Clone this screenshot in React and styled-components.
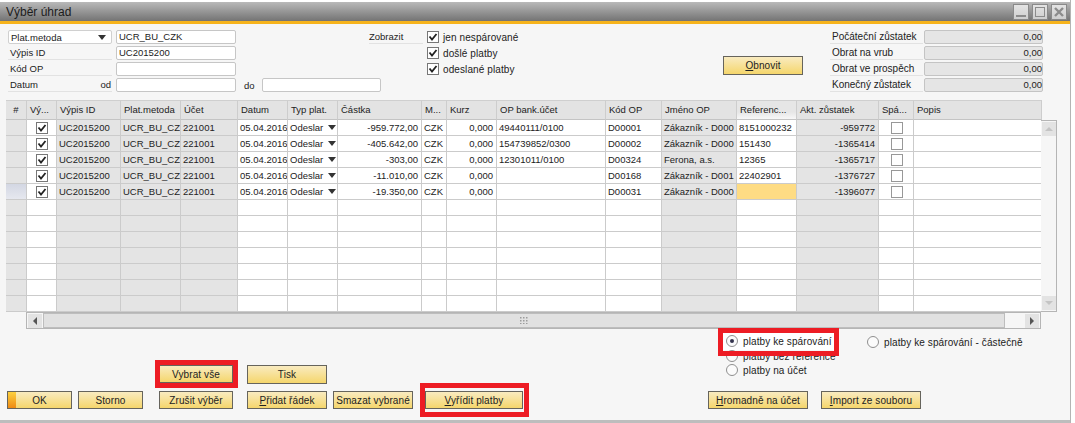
import React from 'react';
import styled, { createGlobalStyle } from 'styled-components';

const GlobalStyle = createGlobalStyle`
  html, body {
    margin: 0;
    padding: 0;
    background: #fff;
    font-family: "Liberation Sans", Arial, sans-serif;
    font-size: 9.5px;
    color: #222;
  }
`;

const Window = styled.div`
  width: 1071px;
  height: 423px;
  box-sizing: border-box;
  padding-top: 2px;
  background: #fff;
  border-right: 1px solid #b4b4b4;
  display: flex;
  flex-direction: column;
`;

const TitleBar = styled.div`
  height: 19px;
  flex: none;
  display: flex;
  align-items: center;
  justify-content: space-between;
  padding: 0 3px 0 6px;
  background: linear-gradient(#b9b9b9, #8f8f8f 60%, #747474);
  border-bottom: 3px solid #f6b31b;
  color: #1c1c1c;
  font-size: 12px;
`;

const TitleButtons = styled.div`
  display: flex;
  gap: 3px;
`;

const TitleButton = styled.div`
  width: 16px;
  height: 16px;
  box-sizing: border-box;
  border: 1px solid #8a8a8a;
  background: linear-gradient(#e4e4e4, #cfcfcf);
  display: flex;
  align-items: center;
  justify-content: center;
`;

const Body = styled.div`
  flex: 1;
  background: #f6f6f6;
  padding: 6px 0 0 6px;
  border-bottom: 3px solid #bdbdbd;
  min-height: 0;
`;

const TopForm = styled.div`
  height: 64px;
  padding-left: 2px;
  margin-bottom: 6px;
  display: flex;
  align-items: flex-start;
`;

const FilterGrid = styled.div`
  width: 373px;
  flex: none;
  display: grid;
  grid-template-columns: 104px 120px 18px 119px;
  column-gap: 4px;
  grid-auto-rows: 14px;
  row-gap: 2px;
`;

const FieldLabel = styled.div`
  display: flex;
  justify-content: space-between;
  align-items: center;
  padding: 0 1px 0 2px;
  border-bottom: 1px solid #e2e2e2;
  white-space: nowrap;
  font-size: ${(p) => (p.$large ? '10px' : '9.5px')};
`;

const ComboBox = styled(FieldLabel)`
  background: #fff;
  border: 1px solid #d0d0d0;
  border-radius: 2px;
  padding: 0 5px 0 2px;
`;

const ToLabel = styled.div`
  display: flex;
  align-items: center;
  padding-left: 4px;
`;

const TextInput = styled.div`
  box-sizing: border-box;
  height: 14px;
  line-height: 12px;
  padding: 0 2px;
  background: #fff;
  border: 1px solid #c6c6c6;
  border-radius: 2px;
`;

const ShowBlock = styled.div`
  margin-left: -12px;
  width: 354px;
  flex: none;
  display: grid;
  grid-template-columns: 54px 1fr;
  column-gap: 4px;
  grid-auto-rows: 14px;
  row-gap: 2px;
`;

const ShowLabel = styled(FieldLabel)`
  grid-row: 1;
  padding-left: 0;
`;

const ShowOption = styled.div`
  grid-column: 2;
  display: flex;
  align-items: center;
  gap: 4px;
  font-size: 10px;
  letter-spacing: 0.1px;
`;

const Box = styled.div`
  width: 12px;
  height: 12px;
  box-sizing: border-box;
  background: #fff;
  border: 1px solid ${(p) => (p.$checked ? '#777' : '#989898')};
  display: flex;
  align-items: center;
  justify-content: center;
  flex: none;
`;

const RefreshColumn = styled.div`
  width: 107px;
  flex: none;
  padding-top: 26px;
  box-sizing: border-box;
  height: 64px;
`;

const BalanceGrid = styled.div`
  display: grid;
  grid-template-columns: 93px 119px;
  column-gap: 1px;
  grid-auto-rows: 14px;
  row-gap: 2px;
  font-size: 10px;
`;

const BalanceField = styled.div`
  box-sizing: border-box;
  background: #e5e5e5;
  border: 1px solid #c4c4c4;
  border-radius: 2px;
  text-align: right;
  line-height: 12px;
  font-size: 9.5px;
`;

const Button = styled.button`
  position: relative;
  display: block;
  width: ${(p) => p.$width}px;
  height: ${(p) => p.$height || 18}px;
  padding: 0;
  box-sizing: border-box;
  border: 1px solid #66645c;
  border-width: 1px 1px 1.5px 1px;
  background: linear-gradient(#f9ebc0, #f5d66c);
  color: #222;
  font: 10px "Liberation Sans", Arial, sans-serif;
  letter-spacing: 0.1px;
  overflow: hidden;
  text-align: center;
  flex: none;
`;

const DefaultStripe = styled.span`
  position: absolute;
  left: 0;
  top: 0;
  bottom: 0;
  width: 8px;
  background: linear-gradient(#fdd13f, #ee8a12);
`;

const Mnemonic = styled.span`
  text-decoration: underline;
`;

const GridFrame = styled.div`
  width: 1052px;
`;

const columns = [21, 30, 64, 60, 57, 50, 50, 84, 25, 50, 109, 56, 75, 60, 82, 35, 128];

const GridRow = styled.div`
  width: 1036px;
  display: grid;
  grid-template-columns: ${columns.map((c) => `${c}px`).join(' ')};
  height: ${(p) => (p.$header ? 20 : 16)}px;
`;

const HeaderCell = styled.div`
  box-sizing: border-box;
  padding: 3px 0 0 3px;
  background: ${(p) => (p.$active ? 'linear-gradient(#e6e6e6 60%, #f8f8f8)' : '#e3e3e3')};
  border-top: 1px solid #cfcfcf;
  border-right: 1px solid #cdcdcd;
  border-bottom: 1px solid #c4c4c4;
  white-space: nowrap;
  overflow: hidden;
  ${(p) => p.$center && 'text-align: center; padding-left: 0;'}
`;

const Cell = styled.div`
  box-sizing: border-box;
  padding: 0 ${(p) => (p.$right ? 3 : 1)}px 0 2px;
  line-height: 16px;
  background: ${(p) => p.$bg || '#fff'};
  border-right: 1px solid #cbcbcb;
  border-bottom: 1px solid #cbcbcb;
  white-space: nowrap;
  overflow: hidden;
  text-align: ${(p) => (p.$right ? 'right' : 'left')};
  display: ${(p) => (p.$flex ? 'flex' : 'block')};
  align-items: center;
  justify-content: ${(p) => p.$flex || 'flex-start'};
`;

const TypeValue = styled.span`
  flex: 1;
`;

const GridBody = styled.div`
  display: flex;
  align-items: stretch;
`;

const VerticalScroll = styled.div`
  width: 16px;
  height: 192px;
  box-sizing: border-box;
  background: #f6f6f6;
  border: 1px solid #b5b5b5;
  border-left: none;
  padding: 1px;
  display: flex;
  flex-direction: column;
  justify-content: space-between;
  margin-left: -1px;
`;

const ScrollButton = styled.div`
  width: 14px;
  height: 14px;
  flex: none;
  background: #e3e3e3;
  display: flex;
  align-items: center;
  justify-content: center;
`;

const HorizontalScroll = styled.div`
  width: 1015px;
  height: 17px;
  margin-left: 20px;
  box-sizing: border-box;
  background: #f6f6f6;
  border: 1px solid #b5b5b5;
  padding: 0 1px;
  display: flex;
  align-items: center;
`;

const ScrollThumb = styled.div`
  width: 962px;
  height: 15px;
  margin-left: 1px;
  box-sizing: border-box;
  background: #e1e1e1;
  border: 1px solid #bdbdbd;
  display: flex;
  align-items: center;
  justify-content: center;
  flex: none;
`;

const ScrollSpacer = styled.div`
  flex: 1;
`;

const Footer = styled.div`
  height: 91px;
  box-sizing: border-box;
  padding: 0 0 11px 1px;
  display: flex;
  align-items: flex-end;
`;

const ButtonStack = styled.div`
  display: flex;
  flex-direction: column;
  margin-left: ${(p) => p.$left || 0}px;
  gap: ${(p) => p.$gap || 0}px;
`;

const Marked = styled.div`
  position: relative;
  flex: none;
  width: fit-content;
`;

const RedFrame = styled.div`
  position: absolute;
  z-index: 2;
  top: ${(p) => -p.$top}px;
  left: ${(p) => -p.$left}px;
  right: ${(p) => -p.$right}px;
  bottom: ${(p) => -p.$bottom}px;
  border: 5px solid #ed1c24;
  pointer-events: none;
`;

const RightColumn = styled.div`
  margin-left: 185px;
  display: flex;
  flex-direction: column;
`;

const RadioGrid = styled.div`
  margin-left: 18px;
  margin-bottom: 14px;
  display: grid;
  grid-template-columns: 141px auto;
  grid-auto-rows: 14px;
`;

const RadioOption = styled.div`
  position: relative;
  display: flex;
  align-items: center;
  gap: 5px;
  font-size: 10px;
  letter-spacing: 0.1px;
  white-space: nowrap;
  width: max-content;
  ${(p) => p.$marked && 'background: #fff; box-shadow: 0 0 0 3px #fff;'}
`;

const RadioDot = styled.div`
  width: 12px;
  height: 12px;
  box-sizing: border-box;
  border-radius: 50%;
  border: 1px solid #8f8f8f;
  background: #fbfbfb;
  display: flex;
  align-items: center;
  justify-content: center;
  flex: none;
  &::after {
    content: '';
    display: ${(p) => (p.$on ? 'block' : 'none')};
    width: 4px;
    height: 4px;
    border-radius: 50%;
    background: #33334d;
  }
`;

const ButtonRow = styled.div`
  display: flex;
  gap: ${(p) => p.$gap}px;
`;

const Tick = () => (
  <svg width="10" height="10" viewBox="0 0 10 10">
    <path d="M1.5 4.5 L4 7.5 L8.5 2" fill="none" stroke="#222" strokeWidth="1.8" />
  </svg>
);

const DownArrow = ({ color = '#333' }) => (
  <svg width="8" height="5" viewBox="0 0 8 5">
    <path d="M0 0 H8 L4 5 Z" fill={color} />
  </svg>
);

const ScrollArrow = ({ d, color }) => (
  <svg width="10" height="10" viewBox="0 0 10 10">
    <path d={d} fill={color} />
  </svg>
);

const Grip = () => (
  <svg width="9" height="7" viewBox="0 0 9 7">
    {[0, 3, 6].flatMap((x) => [0, 3, 6].map((y) => (
      <rect key={`${x}-${y}`} x={x} y={y} width="1.5" height="1.5" fill="#9c9c9c" />
    )))}
  </svg>
);

const headers = ['#', 'Vý...', 'Výpis ID', 'Plat.metoda', 'Účet', 'Datum', 'Typ plat.', 'Částka', 'M...', 'Kurz', 'OP bank.účet', 'Kód OP', 'Jméno OP', 'Referenc...', 'Akt. zůstatek', 'Spá...', 'Popis'];

const rows = [
  { amount: '-959.772,00', bank: '49440111/0100', code: 'D00001', name: 'Zákazník - D000', ref: '8151000232', balance: '-959772' },
  { amount: '-405.642,00', bank: '154739852/0300', code: 'D00002', name: 'Zákazník - D000', ref: '151430', balance: '-1365414' },
  { amount: '-303,00', bank: '12301011/0100', code: 'D00324', name: 'Ferona, a.s.', ref: '12365', balance: '-1365717' },
  { amount: '-11.010,00', bank: '', code: 'D00168', name: 'Zákazník - D001', ref: '22402901', balance: '-1376727' },
  { amount: '-19.350,00', bank: '', code: 'D00031', name: 'Zákazník - D000', ref: '', balance: '-1396077', active: true },
  ...Array.from({ length: 7 }, () => null),
];

const GRAY = '#e4e4e4';

const PaymentRow = ({ row }) => (
  <GridRow>
    <Cell $bg={row?.active ? 'linear-gradient(#d3d7e3, #e6e8ef)' : GRAY} />
    <Cell $flex="center">{row && <Box $checked><Tick /></Box>}</Cell>
    <Cell $bg={GRAY}>{row && 'UC2015200'}</Cell>
    <Cell $bg={GRAY}>{row && 'UCR_BU_CZ'}</Cell>
    <Cell $bg={GRAY}>{row && '221001'}</Cell>
    <Cell>{row && '05.04.2016'}</Cell>
    <Cell $flex="flex-start">
      {row && <TypeValue>Odeslar</TypeValue>}
      {row && <DownArrow />}
    </Cell>
    <Cell $right>{row?.amount}</Cell>
    <Cell>{row && 'CZK'}</Cell>
    <Cell $right>{row && '0,000'}</Cell>
    <Cell>{row?.bank}</Cell>
    <Cell>{row?.code}</Cell>
    <Cell $bg={GRAY}>{row?.name}</Cell>
    <Cell $bg={row?.active ? '#fedc84' : '#fff'}>{row?.ref}</Cell>
    <Cell $bg={GRAY} $right>{row?.balance}</Cell>
    <Cell $flex="center">{row && <Box />}</Cell>
    <Cell />
  </GridRow>
);

const balances = ['Počáteční zůstatek', 'Obrat na vrub', 'Obrat ve prospěch', 'Konečný zůstatek'];

export default function App() {
  return (
    <>
      <GlobalStyle />
      <Window>
        <TitleBar>
          Výběr úhrad
          <TitleButtons>
            <TitleButton>
              <svg width="12" height="12" viewBox="0 0 12 12"><rect x="1" y="9" width="10" height="2" fill="#8c8c8c" /></svg>
            </TitleButton>
            <TitleButton>
              <svg width="12" height="12" viewBox="0 0 12 12"><rect x="1.5" y="1.5" width="9" height="9" fill="none" stroke="#8c8c8c" /></svg>
            </TitleButton>
            <TitleButton>
              <svg width="12" height="12" viewBox="0 0 12 12"><path d="M2 2 L10 10 M10 2 L2 10" stroke="#8c8c8c" strokeWidth="2.4" /></svg>
            </TitleButton>
          </TitleButtons>
        </TitleBar>
        <Body>
          <TopForm>
            <FilterGrid>
              <ComboBox>Plat.metoda <DownArrow /></ComboBox>
              <TextInput>UCR_BU_CZK</TextInput>
              <span />
              <span />
              <FieldLabel>Výpis ID</FieldLabel>
              <TextInput>UC2015200</TextInput>
              <span />
              <span />
              <FieldLabel>Kód OP</FieldLabel>
              <TextInput />
              <span />
              <span />
              <FieldLabel>Datum <span>od</span></FieldLabel>
              <TextInput />
              <ToLabel>do</ToLabel>
              <TextInput />
            </FilterGrid>
            <ShowBlock>
              <ShowLabel>Zobrazit</ShowLabel>
              <ShowOption><Box $checked><Tick /></Box>jen nespárované</ShowOption>
              <ShowOption><Box $checked><Tick /></Box>došlé platby</ShowOption>
              <ShowOption><Box $checked><Tick /></Box>odeslané platby</ShowOption>
            </ShowBlock>
            <RefreshColumn>
              <Button $width={80} $height={19}><Mnemonic>O</Mnemonic>bnovit</Button>
            </RefreshColumn>
            <BalanceGrid>
              {balances.map((label) => (
                <React.Fragment key={label}>
                  <FieldLabel $large>{label}</FieldLabel>
                  <BalanceField>0,00</BalanceField>
                </React.Fragment>
              ))}
            </BalanceGrid>
          </TopForm>

          <GridFrame>
            <GridRow $header>
              {headers.map((h, i) => (
                <HeaderCell key={h} $center={i === 0} $active={h === 'Referenc...'}>{h}</HeaderCell>
              ))}
            </GridRow>
            <GridBody>
              <div>
                {rows.map((row, i) => <PaymentRow key={i} row={row} />)}
              </div>
              <VerticalScroll>
                <ScrollButton><ScrollArrow d="M1 7 L5 3 L9 7 Z" color="#c4c4c4" /></ScrollButton>
                <ScrollButton><ScrollArrow d="M1 3 L9 3 L5 7 Z" color="#c4c4c4" /></ScrollButton>
              </VerticalScroll>
            </GridBody>
            <HorizontalScroll>
              <ScrollButton><ScrollArrow d="M7 1 L7 9 L3 5 Z" color="#555" /></ScrollButton>
              <ScrollThumb><Grip /></ScrollThumb>
              <ScrollSpacer />
              <ScrollButton><ScrollArrow d="M3 1 L3 9 L7 5 Z" color="#555" /></ScrollButton>
            </HorizontalScroll>
          </GridFrame>

          <Footer>
            <Button $width={65}><DefaultStripe />OK</Button>
            <ButtonStack $left={6}><Button $width={65}>Storno</Button></ButtonStack>
            <ButtonStack $left={16} $gap={8}>
              <Marked>
                <Button $width={74}>Vybrat vše</Button>
                <RedFrame $top={5} $left={4} $right={5} $bottom={5} />
              </Marked>
              <Button $width={74}>Zrušit výběr</Button>
            </ButtonStack>
            <ButtonStack $left={14} $gap={7}>
              <Button $width={80} $height={19}>Tisk</Button>
              <Button $width={80}><Mnemonic>P</Mnemonic>řidat řádek</Button>
            </ButtonStack>
            <ButtonStack $left={6}><Button $width={80}>Smazat vybrané</Button></ButtonStack>
            <ButtonStack $left={12}>
              <Marked>
                <Button $width={98}><Mnemonic>V</Mnemonic>yřídit platby</Button>
                <RedFrame $top={8} $left={5} $right={6} $bottom={8} />
              </Marked>
            </ButtonStack>
            <RightColumn>
              <RadioGrid>
                <Marked>
                  <RadioOption $marked><RadioDot $on />platby ke spárování</RadioOption>
                  <RedFrame $top={7} $left={8} $right={7} $bottom={7} />
                </Marked>
                <RadioOption><RadioDot />platby ke spárování - částečně</RadioOption>
                <RadioOption><RadioDot />platby bez reference</RadioOption>
                <span />
                <RadioOption><RadioDot />platby na účet</RadioOption>
              </RadioGrid>
              <ButtonRow $gap={13}>
                <Button $width={100}><Mnemonic>H</Mnemonic>romadně na účet</Button>
                <Button $width={100}><Mnemonic>I</Mnemonic>mport ze souboru</Button>
              </ButtonRow>
            </RightColumn>
          </Footer>
        </Body>
      </Window>
    </>
  );
}
